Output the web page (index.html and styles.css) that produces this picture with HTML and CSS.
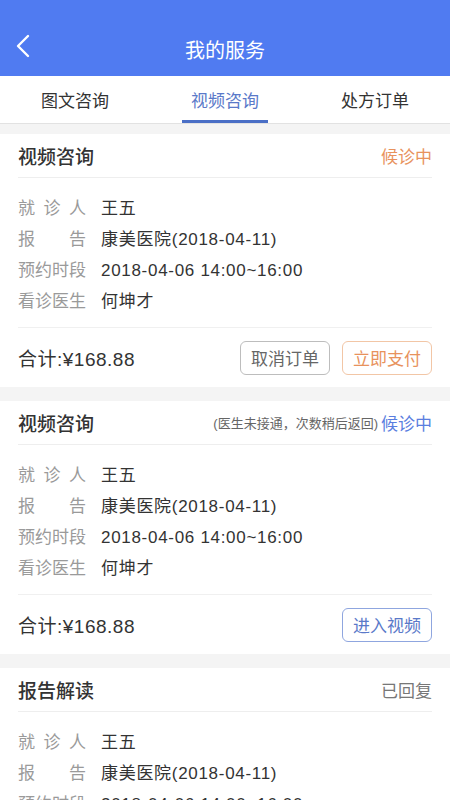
FILE: index.html
```html
<!DOCTYPE html>
<html lang="zh-CN">
<head>
    <meta charset="UTF-8">
    <meta name="viewport" content="width=device-width, initial-scale=1.0">
    <title>我的服务</title>
    <link rel="stylesheet" href="styles.css">
</head>
<body>
    <header class="topbar">
        <a class="back" href="#">
            <svg width="16" height="24" viewBox="0 0 16 24"><polyline points="13,2 3,12 13,22" fill="none" stroke="#fff" stroke-width="2.4" stroke-linecap="round" stroke-linejoin="round"/></svg>
        </a>
        <h1>我的服务</h1>
    </header>

    <nav class="tabs">
        <div class="tab">图文咨询</div>
        <div class="tab active"><span>视频咨询</span></div>
        <div class="tab">处方订单</div>
    </nav>

    <main class="list">
        <section class="card">
            <div class="card-head">
                <h2>视频咨询</h2>
                <span class="status orange">候诊中</span>
            </div>
            <div class="card-body">
                <div class="row"><span class="label">就诊人</span><span class="value">王五</span></div>
                <div class="row"><span class="label">报告</span><span class="value">康美医院(2018-04-11)</span></div>
                <div class="row"><span class="label">预约时段</span><span class="value">2018-04-06 14:00~16:00</span></div>
                <div class="row"><span class="label">看诊医生</span><span class="value">何坤才</span></div>
            </div>
            <div class="card-foot">
                <span class="total">合计:¥168.88</span>
                <div class="actions">
                    <button class="btn gray">取消订单</button>
                    <button class="btn orange">立即支付</button>
                </div>
            </div>
        </section>

        <section class="card">
            <div class="card-head">
                <h2>视频咨询</h2>
                <div class="status-wrap">
                    <span class="hint">(医生未接通，次数稍后返回)</span>
                    <span class="status blue">候诊中</span>
                </div>
            </div>
            <div class="card-body">
                <div class="row"><span class="label">就诊人</span><span class="value">王五</span></div>
                <div class="row"><span class="label">报告</span><span class="value">康美医院(2018-04-11)</span></div>
                <div class="row"><span class="label">预约时段</span><span class="value">2018-04-06 14:00~16:00</span></div>
                <div class="row"><span class="label">看诊医生</span><span class="value">何坤才</span></div>
            </div>
            <div class="card-foot">
                <span class="total">合计:¥168.88</span>
                <div class="actions">
                    <button class="btn blue">进入视频</button>
                </div>
            </div>
        </section>

        <section class="card">
            <div class="card-head">
                <h2>报告解读</h2>
                <span class="status gray">已回复</span>
            </div>
            <div class="card-body">
                <div class="row"><span class="label">就诊人</span><span class="value">王五</span></div>
                <div class="row"><span class="label">报告</span><span class="value">康美医院(2018-04-11)</span></div>
                <div class="row"><span class="label">预约时段</span><span class="value">2018-04-06 14:00~16:00</span></div>
                <div class="row"><span class="label">看诊医生</span><span class="value">何坤才</span></div>
            </div>
        </section>
    </main>
</body>
</html>
```

FILE: styles.css
```css
* {
    margin: 0;
    padding: 0;
    box-sizing: border-box;
    font-family: "Liberation Sans", "Noto Sans CJK SC", sans-serif;
}

body {
    background-color: #f4f4f4;
    color: #333;
    width: 450px;
}

/* Header */
.topbar {
    height: 76px;
    padding-top: 23px;
    background-color: #507bf1;
    display: flex;
    align-items: center;
    position: relative;
}

.topbar .back {
    position: absolute;
    left: 15px;
    top: 34px;
    display: flex;
}

.topbar h1 {
    flex: 1;
    text-align: center;
    color: #fff;
    font-size: 20px;
    font-weight: normal;
}

/* Tabs */
.tabs {
    display: flex;
    height: 48px;
    background-color: #fff;
    border-bottom: 1px solid #e2e2e2;
}

.tab {
    flex: 1;
    display: flex;
    justify-content: center;
    align-items: center;
    font-size: 17px;
    color: #333;
}

.tab.active {
    align-items: stretch;
}

.tab.active span {
    width: 86px;
    display: flex;
    justify-content: center;
    align-items: center;
    color: #5a79c9;
    border-bottom: 3px solid #4a6fc6;
    padding-top: 3px;
}

/* Cards */
.list {
    padding-top: 10px;
}

.card {
    background-color: #fff;
    margin-bottom: 14px;
}

.card-head {
    height: 44px;
    margin: 0 18px;
    border-bottom: 1px solid #eee;
    display: flex;
    justify-content: space-between;
    align-items: center;
}

.card-head h2 {
    font-size: 19px;
    font-weight: 500;
    color: #333;
}

.status {
    font-size: 17px;
}

.status.orange {
    color: #e8925c;
}

.status.blue {
    color: #5a7ee0;
}

.status.gray {
    color: #777;
}

.status-wrap {
    display: flex;
    align-items: center;
    gap: 3px;
}

.hint {
    font-size: 13px;
    color: #666;
}

.card-body {
    padding: 15px 18px 10px;
}

.row {
    display: flex;
    line-height: 31px;
    font-size: 17px;
}

.label {
    width: 68px;
    margin-right: 15px;
    color: #9a9a9a;
    text-align: justify;
    text-align-last: justify;
}

.value {
    color: #333;
    letter-spacing: 0.7px;
}

.card-foot {
    height: 60px;
    margin: 0 18px;
    border-top: 1px solid #f0f0f0;
    display: flex;
    justify-content: space-between;
    align-items: center;
}

.total {
    font-size: 19px;
    color: #333;
    letter-spacing: 0.5px;
}

.actions {
    display: flex;
    gap: 12px;
}

.btn {
    width: 90px;
    height: 34px;
    background-color: #fff;
    border-radius: 6px;
    font-size: 17px;
    cursor: pointer;
}

.btn.gray {
    border: 1px solid #bdbdbd;
    color: #666;
}

.btn.orange {
    border: 1px solid #f2c6a6;
    color: #e8925c;
}

.btn.blue {
    border: 1px solid #8fa6df;
    color: #5a79c9;
}
```
